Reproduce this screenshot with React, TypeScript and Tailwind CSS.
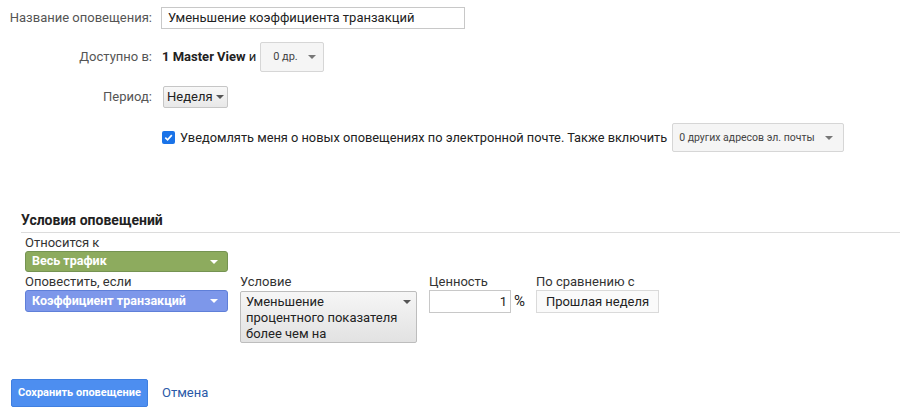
import React from 'react';

const Caret = ({ className = '' }: { className?: string }) => (
  <svg viewBox="0 0 8 4" className={`w-[8px] h-[4px] ${className}`}>
    <path d="M0 0 L8 0 L4 4 Z" fill="currentColor" />
  </svg>
);

export default function App() {
  return (
    <div className="w-[900px] h-[416px] bg-white font-['Roboto','Liberation_Sans',sans-serif] text-[13px] text-[#333] overflow-hidden">
      {/* Основная форма */}
      <div className="pt-[7px]">
        <div className="flex items-center h-[22px]">
          <div className="w-[152px] text-right text-[#555]">Название оповещения:</div>
          <div className="ml-[9px] w-[304px] h-[22px] border border-[#c8c8c8] flex items-center px-[6px] text-[#222]">
            Уменьшение коэффициента транзакций
          </div>
        </div>

        <div className="flex items-center h-[30px] mt-[13px]">
          <div className="w-[152px] text-right text-[#555]">Доступно в:</div>
          <div className="ml-[10px] font-bold text-[#222]">1 Master View</div>
          <div className="ml-[3px] text-[#222]">и</div>
          <div className="ml-[4px] w-[64px] h-[30px] border border-[#d6d6d6] rounded-[2px] bg-[#f5f5f5] flex items-center pl-[12px] gap-[10px] text-[11px] text-[#444]">
            <span>0 др.</span>
            <Caret className="text-[#777]" />
          </div>
        </div>

        <div className="flex items-center h-[22px] mt-[14px]">
          <div className="w-[152px] text-right text-[#555]">Период:</div>
          <div className="ml-[11px] w-[65px] h-[22px] border border-[#c6c6c6] rounded-[2px] bg-gradient-to-b from-[#f8f8f8] to-[#e8e8e8] flex items-center pl-[3px] gap-[3px] text-[#222]">
            <span>Неделя</span>
            <Caret className="text-[#555]" />
          </div>
        </div>

        <div className="flex items-center h-[29px] mt-[15px] pl-[162px]">
          <div className="w-[13px] h-[13px] rounded-[2px] bg-[#1a73e8] flex items-center justify-center">
            <svg viewBox="0 0 12 12" className="w-[11px] h-[11px]">
              <path d="M2.5 6.2 L5 8.6 L9.6 3.4" stroke="white" strokeWidth="1.8" fill="none" />
            </svg>
          </div>
          <span className="ml-[5px] text-[12.8px] text-[#222]">
            Уведомлять меня о новых оповещениях по электронной почте. Также включить
          </span>
          <div className="ml-[5px] w-[172px] h-[29px] border border-[#d6d6d6] rounded-[2px] bg-[#f5f5f5] flex items-center justify-between pl-[6px] pr-[10px] text-[10.5px] text-[#444]">
            <span>0 других адресов эл. почты</span>
            <Caret className="text-[#777]" />
          </div>
        </div>
      </div>

      {/* Условия */}
      <div className="mt-[58px] ml-[21px] h-[23px] border-b border-[#dcdcdc] font-bold text-[14px] text-[#222]">
        Условия оповещений
      </div>

      <div className="pl-[25px] pt-[2px]">
        <div className="leading-[15px] text-[#333]">Относится к</div>
        <div className="mt-[1px] w-[203px] h-[21px] rounded-[3px] bg-[#8dab5e] border border-[#759352] flex items-center justify-between pl-[6px] pr-[9px] text-white font-bold text-[12.5px]">
          <span>Весь трафик</span>
          <Caret className="text-white" />
        </div>

        <div className="flex mt-[2px]">
          <div className="w-[215px]">
            <div className="leading-[15px]">Оповестить, если</div>
            <div className="mt-[1px] w-[203px] h-[22px] rounded-[3px] bg-[#7d97ea] border border-[#5f7fd8] flex items-center justify-between pl-[6px] pr-[9px] text-white font-bold text-[12.5px]">
              <span>Коэффициент транзакций</span>
              <Caret className="text-white" />
            </div>
          </div>

          <div className="w-[189px]">
            <div className="leading-[15px]">Условие</div>
            <div className="mt-[2px] w-[177px] h-[52px] border border-[#bdbdbd] rounded-[2px] bg-gradient-to-b from-[#f6f6f6] to-[#e2e2e2] flex justify-between pl-[5px] pr-[5px] pt-[2px]">
              <span className="leading-[16px] text-[#222]">
                Уменьшение
                <br />
                процентного показателя
                <br />
                более чем на
              </span>
              <Caret className="text-[#555] mt-[6px]" />
            </div>
          </div>

          <div className="w-[107px]">
            <div className="leading-[15px]">Ценность</div>
            <div className="mt-[1px] flex items-center">
              <div className="w-[82px] h-[23px] border border-[#c8c8c8] flex items-center justify-end pr-[3px] text-[#222]">1</div>
              <span className="ml-[3px] text-[15px] text-[#222]">%</span>
            </div>
          </div>

          <div>
            <div className="leading-[15px]">По сравнению с</div>
            <div className="mt-[1px] w-[123px] h-[23px] border border-[#dadada] bg-[#fafafa] flex items-center justify-center text-[#222]">
              Прошлая неделя
            </div>
          </div>
        </div>
      </div>

      {/* Кнопки */}
      <div className="flex items-center mt-[36px] pl-[11px]">
        <div className="w-[137px] h-[28px] rounded-[2px] bg-[#4d8ef0] border border-[#3f7fe0] flex items-center justify-center text-white font-bold text-[11px]">
          Сохранить оповещение
        </div>
        <div className="ml-[14px] text-[#2a5aa8]">Отмена</div>
      </div>
    </div>
  );
}
